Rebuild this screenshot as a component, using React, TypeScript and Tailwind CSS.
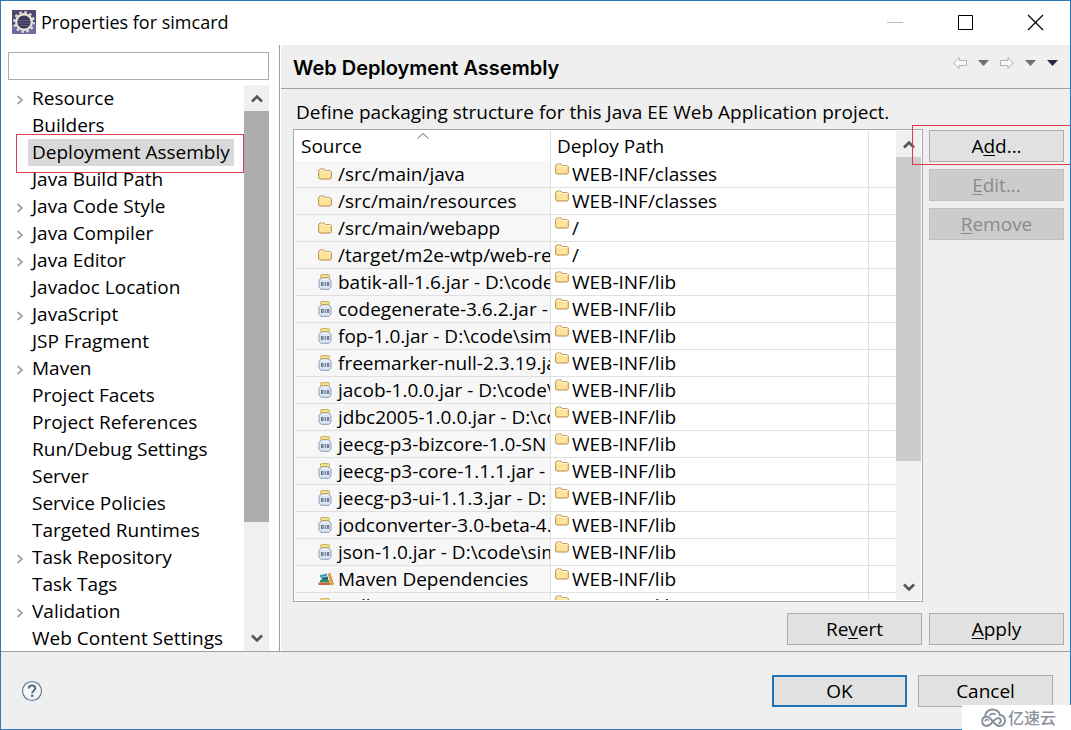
import React from 'react';
import { clsx } from 'clsx';

const CATEGORIES = [
  { name: 'Resource', expandable: true },
  { name: 'Builders' },
  { name: 'Deployment Assembly', selected: true },
  { name: 'Java Build Path' },
  { name: 'Java Code Style', expandable: true },
  { name: 'Java Compiler', expandable: true },
  { name: 'Java Editor', expandable: true },
  { name: 'Javadoc Location' },
  { name: 'JavaScript', expandable: true },
  { name: 'JSP Fragment' },
  { name: 'Maven', expandable: true },
  { name: 'Project Facets' },
  { name: 'Project References' },
  { name: 'Run/Debug Settings' },
  { name: 'Server' },
  { name: 'Service Policies' },
  { name: 'Targeted Runtimes' },
  { name: 'Task Repository', expandable: true },
  { name: 'Task Tags' },
  { name: 'Validation', expandable: true },
  { name: 'Web Content Settings' },
];

type Kind = 'folder' | 'jar' | 'library';

const ASSEMBLY: { source: string; path: string; kind: Kind }[] = [
  { source: '/src/main/java', path: 'WEB-INF/classes', kind: 'folder' },
  { source: '/src/main/resources', path: 'WEB-INF/classes', kind: 'folder' },
  { source: '/src/main/webapp', path: '/', kind: 'folder' },
  { source: '/target/m2e-wtp/web-re', path: '/', kind: 'folder' },
  { source: 'batik-all-1.6.jar - D:\\code', path: 'WEB-INF/lib', kind: 'jar' },
  { source: 'codegenerate-3.6.2.jar -', path: 'WEB-INF/lib', kind: 'jar' },
  { source: 'fop-1.0.jar - D:\\code\\sim', path: 'WEB-INF/lib', kind: 'jar' },
  { source: 'freemarker-null-2.3.19.ja', path: 'WEB-INF/lib', kind: 'jar' },
  { source: 'jacob-1.0.0.jar - D:\\code\\', path: 'WEB-INF/lib', kind: 'jar' },
  { source: 'jdbc2005-1.0.0.jar - D:\\co', path: 'WEB-INF/lib', kind: 'jar' },
  { source: 'jeecg-p3-bizcore-1.0-SN', path: 'WEB-INF/lib', kind: 'jar' },
  { source: 'jeecg-p3-core-1.1.1.jar -', path: 'WEB-INF/lib', kind: 'jar' },
  { source: 'jeecg-p3-ui-1.1.3.jar - D:', path: 'WEB-INF/lib', kind: 'jar' },
  { source: 'jodconverter-3.0-beta-4.', path: 'WEB-INF/lib', kind: 'jar' },
  { source: 'json-1.0.jar - D:\\code\\sim', path: 'WEB-INF/lib', kind: 'jar' },
  { source: 'Maven Dependencies', path: 'WEB-INF/lib', kind: 'library' },
  { source: 'ojdbc14-10.2.0.5.0.jar - D', path: 'WEB-INF/lib', kind: 'jar' },
];

const EclipseIcon = () => (
  <svg className="h-6 w-6 shrink-0" viewBox="0 0 24 24" aria-hidden="true">
    <rect width="24" height="24" fill="#50466f" />
    <rect y="15" width="24" height="9" fill="#7468a0" />
    <circle cx="12" cy="12" r="9.800" fill="none" stroke="#dedbd2" strokeWidth="2.400" strokeDasharray="2.600 2.530" />
    <circle cx="12" cy="12" r="7.800" fill="#3d3955" stroke="#e6e3da" strokeWidth="2.400" />
    <path d="M6 10.500h12M5.500 13h13M6.500 15.500h11" stroke="#5e5985" />
  </svg>
);

const FolderIcon = () => (
  <svg className="h-3 w-3.5 shrink-0" viewBox="0 0 14 12" aria-hidden="true">
    <path d="M.7 10V2.300L2 1h4l1.300 1.700h5l1 1V10l-1 1H1.700z" fill="#fde49a" stroke="#b98a48" />
    <path d="M1.500 4.200 2.600 2h3l1.200 1.600h5.700" fill="none" stroke="#fff6d8" />
  </svg>
);

const JarIcon = () => (
  <svg className="h-4 w-3.5 shrink-0" viewBox="0 0 14 16" aria-hidden="true">
    <path d="M3 4h8l2 2.500V13l-2 2.300H3L1 13V6.500z" fill="#dbe6f5" stroke="#8d9cba" />
    <path d="M3.500 5h7" stroke="#fff" />
    <rect x="2.500" y=".7" width="9" height="2.800" rx="1" fill="#f3e6a0" stroke="#c3a548" />
    <path d="M3.500 8.500h1.500v3H3.500zM7.200 8v4M9.300 8.500h1.500v3H9.300z" fill="none" stroke="#4b5970" strokeWidth=".9" />
  </svg>
);

const LibraryIcon = () => (
  <svg className="h-4 w-4 shrink-0" viewBox="0 0 16 16" aria-hidden="true">
    <path d="m2 4 7-1.500V5L2 6.500z" fill="#3fa3b5" />
    <path d="m3.500 6.500 6.500-1V9h-6.500z" fill="#1f6f86" />
    <path d="M2 9h9v2.500H2z" fill="#3f8f4a" />
    <path d="M.5 11.500H12V14H.5z" fill="#c9653f" />
    <path d="m10.200 3 2-.8 3.300 11-2.500.8z" fill="#e6a83c" stroke="#b57a22" strokeWidth=".5" />
  </svg>
);

const SourceIcon: React.FC<{ kind: Kind }> = ({ kind }) => {
  if (kind === 'jar') return <JarIcon />;
  if (kind === 'library') return <LibraryIcon />;
  return <FolderIcon />;
};

const Chevron: React.FC<{ up?: boolean }> = ({ up }) => (
  <svg className="h-3 w-3" viewBox="0 0 12 12" aria-hidden="true">
    <path d={up ? 'M1 9.500 6 4.500l5 5' : 'M1 3.500l5 5 5-5'} fill="none" stroke="#555" strokeWidth="2.600" />
  </svg>
);

const Caret: React.FC<{ className: string }> = ({ className }) => (
  <svg className={clsx('h-1.5 w-[11px]', className)} viewBox="0 0 11 6" aria-hidden="true">
    <path d="M0 0h11L5.500 6z" fill="currentColor" />
  </svg>
);

const ScrollBar: React.FC<{ thumb: string }> = ({ thumb }) => (
  <div className="flex w-[25px] shrink-0 flex-col bg-[#f0f0f0]">
    <button aria-label="Scroll up" className="flex h-[26px] shrink-0 items-center justify-center">
      <Chevron up />
    </button>
    <div className="min-h-0 flex-1">
      <div className={thumb} />
    </div>
    <button aria-label="Scroll down" className="flex h-[26px] shrink-0 items-center justify-center">
      <Chevron />
    </button>
  </div>
);

type PushProps = { children: React.ReactNode; disabled?: boolean; primary?: boolean };

const PushButton: React.FC<PushProps> = ({ children, disabled, primary }) => (
  <button
    disabled={disabled}
    className={clsx(
      'h-8 w-[135px] shrink-0 leading-7',
      disabled && 'border border-[#bfbfbf] bg-[#cccccc] text-[#8a8a8a]',
      primary && 'border-2 border-[#1f74b8] bg-[#e1e1e1]',
      !disabled && !primary && 'border border-[#adadad] bg-[#e1e1e1]'
    )}
  >
    {children}
  </button>
);

const Mnemonic: React.FC<{ children: string }> = ({ children }) => (
  <span className="underline decoration-1 underline-offset-2">{children}</span>
);

const TitleBar = () => (
  <header className="flex h-11 shrink-0 items-center pr-[26px] pb-0.5 pl-[11px]">
    <EclipseIcon />
    <h1 className="ml-[5px] flex-1 text-lg leading-[27px]">Properties for simcard</h1>
    <div className="flex items-center gap-[52px]">
      <button aria-label="Minimize" disabled>
        <svg className="h-[18px] w-[18px]" viewBox="0 0 18 18"><path d="M1 9.500h16" stroke="#bbb" /></svg>
      </button>
      <button aria-label="Maximize">
        <svg className="h-[18px] w-[18px]" viewBox="0 0 18 18"><path d="M2.500 2.500h14v14h-14z" fill="none" stroke="#000" /></svg>
      </button>
      <button aria-label="Close">
        <svg className="h-[18px] w-[18px]" viewBox="0 0 18 18"><path d="m2 2 15 15M17 2 2 17" stroke="#000" strokeWidth="1.200" /></svg>
      </button>
    </div>
  </header>
);

const Sidebar = () => (
  <aside className="flex w-[279px] shrink-0 flex-col border-r border-[#a0a0a0] bg-white pt-[7px] pr-2.5 pl-[7px]">
    <input aria-label="Filter" className="h-7 w-full shrink-0 border border-[#adadad] px-1 outline-none" />
    <div className="mt-[5px] flex min-h-0 flex-1">
      <ul className="min-w-0 flex-1 overflow-hidden">
        {CATEGORIES.map((item) => (
          <li key={item.name} className="relative flex h-[27px] items-center pl-2">
            <span className="w-3 shrink-0">
              {item.expandable && (
                <svg className="mt-0.5 h-2.5 w-2" viewBox="0 0 8 10" aria-hidden="true">
                  <path d="m1.500 1 4.500 4-4.500 4" fill="none" stroke="#a6a6a6" strokeWidth="1.800" />
                </svg>
              )}
            </span>
            <a href="#" className={clsx('px-1 leading-[27px] whitespace-nowrap', item.selected && 'bg-[#d9d9d9]')}>
              {item.name}
            </a>
            {item.selected && (
              <span className="pointer-events-none absolute -top-[5px] right-0 -bottom-[7px] left-2 border border-[#dc3c50]" />
            )}
          </li>
        ))}
      </ul>
      <ScrollBar thumb="h-4/5 bg-[#adadad]" />
    </div>
  </aside>
);

const AssemblyTable = () => (
  <div className="flex min-w-0 flex-1 border border-[#a5a9b0] bg-white p-px">
    <div className="min-w-0 flex-1 overflow-hidden">
      <table className="w-full table-fixed border-separate border-spacing-0 text-left">
        <colgroup>
          <col className="w-[256px]" />
          <col />
          <col className="w-[27px]" />
        </colgroup>
        <thead>
          <tr className="h-[30px]">
            <th className="relative border-r border-[#e0e0e0] p-0 pl-1.5 font-normal">
              Source
              <svg className="absolute top-0.5 left-[122px] h-1.5 w-3" viewBox="0 0 12 6" aria-hidden="true">
                <path d="m.5 5.500 5.500-5 5.500 5" fill="none" stroke="#666" />
              </svg>
            </th>
            <th className="border-r border-[#e0e0e0] p-0 pl-1.5 font-normal">Deploy Path</th>
            <td />
          </tr>
        </thead>
        <tbody>
          {ASSEMBLY.map((row) => (
            <tr key={row.source} className="h-[27px]">
              <td className="overflow-hidden border-r border-b border-[#e0e0e0] bg-[#f7f7f7] p-0 pl-[23px]">
                <div className="flex h-[26px] items-center">
                  <span className="flex w-5 shrink-0">
                    <SourceIcon kind={row.kind} />
                  </span>
                  <span className="leading-[26px] whitespace-nowrap">{row.source}</span>
                </div>
              </td>
              <td className="border-r border-b border-[#e0e0e0] p-0 pl-1">
                <div className="flex h-[26px] gap-[3px]">
                  <span className="pt-0.5">
                    <FolderIcon />
                  </span>
                  <span className="leading-[26px] whitespace-nowrap">{row.path}</span>
                </div>
              </td>
              <td className="border-b border-[#e0e0e0] p-0" />
            </tr>
          ))}
        </tbody>
      </table>
    </div>
    <ScrollBar thumb="h-[73%] bg-[#cccccc]" />
  </div>
);

const HistoryNav = () => (
  <div className="flex items-center gap-[11px] pb-2">
    <button aria-label="Back" disabled>
      <svg className="h-3.5 w-3.5" viewBox="0 0 14 14">
        <path d="M.7 7 6 1.500V4.500h7.500v5H6v3z" fill="#f8f8f8" stroke="#b0b0b0" />
      </svg>
    </button>
    <button aria-label="Back history"><Caret className="text-[#707070]" /></button>
    <button aria-label="Forward" disabled>
      <svg className="h-3.5 w-3.5" viewBox="0 0 14 14">
        <path d="M13.300 7 8 1.500V4.500H.5v5H8v3z" fill="#f8f8f8" stroke="#b0b0b0" />
      </svg>
    </button>
    <button aria-label="Forward history"><Caret className="text-[#707070]" /></button>
    <button aria-label="View menu"><Caret className="text-[#2c2946]" /></button>
  </div>
);

const Watermark = () => (
  <div className="absolute -right-px -bottom-px flex h-[25px] w-[109px] items-center gap-0.5 bg-white pl-[18px] text-[#8b919c]">
    <svg className="h-5 w-[26px]" viewBox="0 0 26 20" aria-hidden="true">
      <path
        d="M5 8.500C5 4.500 8.500 1.500 12.500 1.500c4 0 6.500 2.200 7.500 5.500 3.200.4 5 3 5 5.800a5.200 5.200 0 0 1-5.200 5.200c-3.300 0-5-2.200-6.800-4.500S9.500 8.500 6.300 8.500a4.800 4.800 0 0 0 0 9.500c3.700 0 5-2.500 6.700-4.500s2.800-3.500 5.500-3.500a2.800 2.800 0 0 1 0 5.500"
        fill="none"
        stroke="currentColor"
        strokeWidth="2"
      />
      <path d="M5 13.500a2 2 0 0 1 3.800-.8M9.500 7.500a4.500 4.500 0 0 1 6-1" fill="none" stroke="currentColor" strokeWidth="1.600" />
    </svg>
    <span className="text-base leading-6 font-medium">亿速云</span>
  </div>
);

const App = () => (
  <div className="relative flex h-screen min-w-[800px] flex-col border border-[#2f78b7] bg-white font-['Open_Sans','Noto_Sans_CJK_SC',sans-serif] text-[19px] leading-[27px] text-black">
    <TitleBar />
    <div className="flex min-h-0 flex-1 border-b border-[#a0a0a0]">
      <Sidebar />
      <main className="ml-px flex min-w-0 flex-1 flex-col bg-[#efefef]">
        <div className="flex h-11 shrink-0 items-center justify-between border-b border-[#a0a0a0] pr-3 pl-3">
          <h2 className="pt-0.5 font-['Inter',sans-serif] text-xl font-semibold">Web Deployment Assembly</h2>
          <HistoryNav />
        </div>
        <p className="mt-2.5 mb-[3px] pl-[15px] leading-[27px] whitespace-nowrap">
          Define packaging structure for this Java EE Web Application project.
        </p>
        <div className="flex min-h-0 flex-1 gap-1.5 pl-3">
          <AssemblyTable />
          <div className="flex flex-col gap-[7px] pr-1.5">
            <div className="relative mt-px flex">
              <PushButton>A<Mnemonic>d</Mnemonic>d...</PushButton>
              <span className="pointer-events-none absolute -top-[5px] -right-1.5 -bottom-[3px] -left-[17px] border border-r-0 border-[#dc3c50]" />
            </div>
            <PushButton disabled><Mnemonic>E</Mnemonic>dit...</PushButton>
            <PushButton disabled><Mnemonic>R</Mnemonic>emove</PushButton>
          </div>
        </div>
        <div className="mt-[11px] mb-1.5 flex justify-end gap-[7px] pr-1.5">
          <PushButton>Re<Mnemonic>v</Mnemonic>ert</PushButton>
          <PushButton><Mnemonic>A</Mnemonic>pply</PushButton>
        </div>
      </main>
    </div>
    <footer className="flex h-[77px] shrink-0 items-center gap-[11px] bg-[#efefef] pr-[17px] pl-5">
      <button aria-label="Help" className="mr-auto">
        <svg className="h-[22px] w-[22px]" viewBox="0 0 22 22">
          <circle cx="11" cy="11" r="9.500" fill="#f4f6f9" stroke="#657a94" strokeWidth="1.200" />
          <path d="M7.800 8.500c0-2 1.400-3 3.200-3s3.200 1 3.200 2.800c0 2.400-3 2.500-3 5" fill="none" stroke="#56697f" strokeWidth="2" />
          <circle cx="11.200" cy="15.800" r="1.300" fill="#56697f" />
        </svg>
      </button>
      <PushButton primary>OK</PushButton>
      <PushButton>Cancel</PushButton>
    </footer>
    <Watermark />
  </div>
);

export default App;
